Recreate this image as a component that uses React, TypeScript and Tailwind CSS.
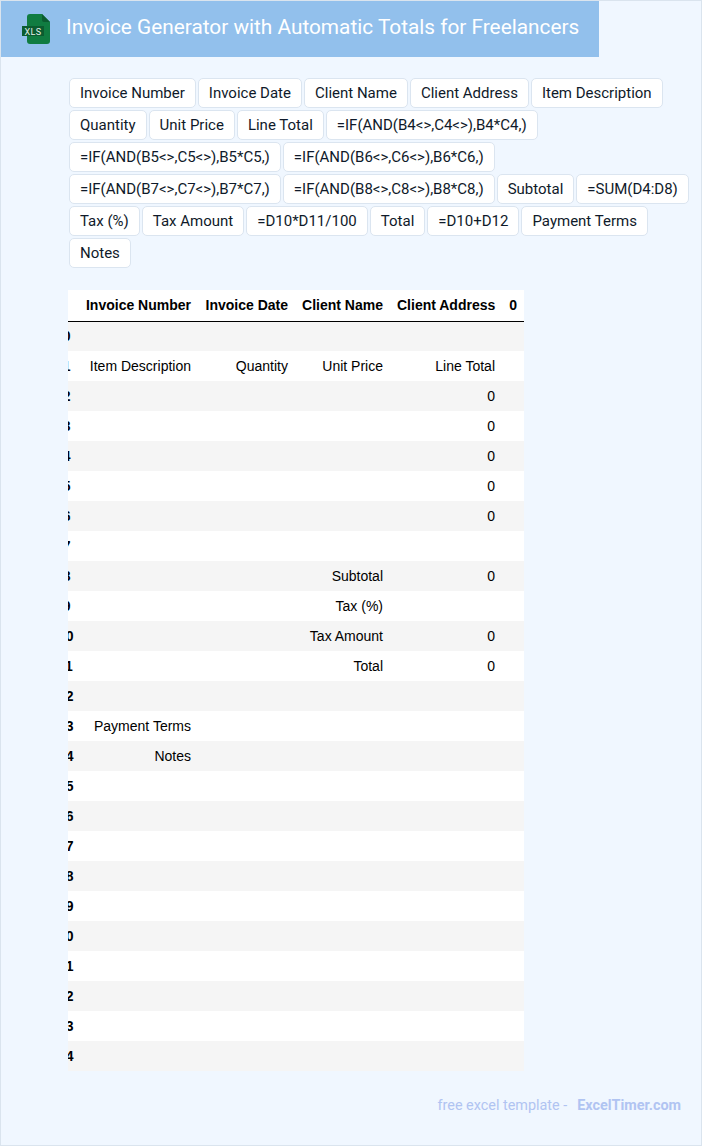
const chips = [
  "Invoice Number", "Invoice Date", "Client Name", "Client Address", "Item Description",
  "Quantity", "Unit Price", "Line Total", "=IF(AND(B4<>,C4<>),B4*C4,)",
  "=IF(AND(B5<>,C5<>),B5*C5,)", "=IF(AND(B6<>,C6<>),B6*C6,)",
  "=IF(AND(B7<>,C7<>),B7*C7,)", "=IF(AND(B8<>,C8<>),B8*C8,)", "Subtotal", "=SUM(D4:D8)",
  "Tax (%)", "Tax Amount", "=D10*D11/100", "Total", "=D10+D12", "Payment Terms",
  "Notes",
];

const rows: Record<number, string[]> = {
  1: ["Item Description", "Quantity", "Unit Price", "Line Total", ""],
  2: ["", "", "", "0", ""],
  3: ["", "", "", "0", ""],
  4: ["", "", "", "0", ""],
  5: ["", "", "", "0", ""],
  6: ["", "", "", "0", ""],
  8: ["", "", "Subtotal", "0", ""],
  9: ["", "", "Tax (%)", "", ""],
  10: ["", "", "Tax Amount", "0", ""],
  11: ["", "", "Total", "0", ""],
  13: ["Payment Terms", "", "", "", ""],
  14: ["Notes", "", "", "", ""],
};

const headers = ["Invoice Number", "Invoice Date", "Client Name", "Client Address", "0"];
const indexes = Array.from({ length: 25 }, (_, i) => i);

function XlsIcon() {
  return (
    <svg width="28" height="32" viewBox="0 0 28 32" className="shrink-0">
      <path d="M8 1h12l8 8v19a3 3 0 0 1-3 3H8a3 3 0 0 1-3-3V4a3 3 0 0 1 3-3z" fill="#107c41" />
      <path d="M20 1l8 8h-6a2 2 0 0 1-2-2z" fill="#0b5c30" />
      <rect x="0" y="13" width="22" height="10" fill="#0b5c30" />
      <text x="11" y="21.5" textAnchor="middle" fontSize="9" fontFamily="Roboto, sans-serif" fill="#e6f2ea" letterSpacing="0.4">XLS</text>
    </svg>
  );
}

export default function App() {
  return (
    <div className="h-[1146px] border border-[#dae4ee] bg-[#f0f7ff] font-['Roboto',sans-serif]">
      <div className="flex h-[56px] w-[598px] items-center bg-[#92c0ec] pl-[21px]">
        <XlsIcon />
        <h1 className="mb-[3px] ml-[16px] text-[20.8px] font-normal whitespace-nowrap text-white">
          Invoice Generator with Automatic Totals for Freelancers
        </h1>
      </div>

      <div className="mt-[21px] flex flex-wrap gap-[2px] pr-[10px] pl-[68px]">
        {chips.map((c) => (
          <span key={c} className="flex h-[30px] items-center rounded-[5px] border border-[#dbe5f0] bg-white px-[10px] text-[15px] text-[#0f1a2a]">
            {c}
          </span>
        ))}
      </div>

      <div className="mt-[22px] ml-[67px] w-[456px] overflow-hidden">
        <table className="ml-[-10px] w-[466px] table-fixed border-collapse font-['Liberation_Sans',sans-serif] text-[14px] text-black">
          <colgroup>
            <col className="w-[20px]" />
            <col className="w-[120px]" />
            <col className="w-[97px]" />
            <col className="w-[95px]" />
            <col className="w-[112px]" />
            <col className="w-[22px]" />
          </colgroup>
          <thead>
            <tr className="h-[31px] border-b border-black bg-white">
              <th />
              {headers.map((h) => (
                <th key={h} className="px-[7px] text-right font-bold whitespace-nowrap">{h}</th>
              ))}
            </tr>
          </thead>
          <tbody>
            {indexes.map((i) => (
              <tr key={i} className={i % 2 === 0 ? "h-[30px] bg-[#f5f5f5]" : "h-[30px] bg-white"}>
                <th className="pr-[7.5px] text-right font-bold whitespace-nowrap">{i}</th>
                {(rows[i] ?? ["", "", "", "", ""]).map((v, j) => (
                  <td key={j} className="px-[7px] text-right whitespace-nowrap">{v}</td>
                ))}
              </tr>
            ))}
          </tbody>
        </table>
      </div>

      <div className="mt-[24px] flex justify-end pr-[20px] text-[14.4px] text-[#b0c4f2]">
        <span>free excel template -</span>
        <span className="ml-[10px] font-bold">ExcelTimer.com</span>
      </div>
    </div>
  );
}
